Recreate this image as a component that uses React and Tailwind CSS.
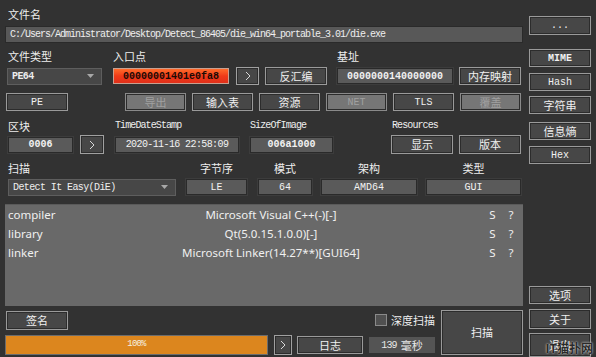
import React from "react";

const cjk = { fontFamily: '"Noto Sans CJK SC", "Noto Sans", sans-serif' };
const mono = { fontFamily: '"Liberation Mono", "Noto Sans CJK SC", monospace' };
const sans = { fontFamily: '"Noto Sans", "Noto Sans CJK SC", sans-serif' };

function Btn({ children, className = "", disabled = false, latin = false }) {
  return (
    <div
      className={
        "flex items-center justify-center border shadow-[inset_0_0_0_1px_#2c2c2c] " +
        (disabled
          ? "border-[#8a8a8a] bg-[#767676] text-[#a0a0a0] "
          : "border-[#9a9a9a] bg-[#474747] text-[#f0f0f0] ") +
        (latin ? "text-[10px] " : "text-[11px] ") +
        className
      }
      style={latin ? mono : cjk}
    >
      {children}
    </div>
  );
}

function Box({ children, className = "", bold = false }) {
  return (
    <div
      className={
        "flex items-center justify-center border border-[#2a2a2a] bg-[#5a5a5a] text-[10px] text-[#f2f2f2] shadow-[0_0_0_1px_#3c3c3c] " +
        (bold ? "font-bold " : "") +
        className
      }
      style={mono}
    >
      {children}
    </div>
  );
}

function Combo({ children, className = "" }) {
  return (
    <div
      className={
        "flex items-center justify-between border border-[#5e5e5e] bg-[#474747] pl-[4px] pr-[7px] text-[10px] text-[#eeeeee] " +
        className
      }
      style={mono}
    >
      <span className="tracking-[-0.6px]">{children}</span>
      <svg width="7" height="4" viewBox="0 0 7 4">
        <path d="M0 0 L7 0 L3.5 4 Z" fill="#a8a8a8" />
      </svg>
    </div>
  );
}

function Arrow({ className = "" }) {
  return (
    <div
      className={
        "flex items-center justify-center border border-[#a0a0a0] bg-[#474747] shadow-[inset_0_0_0_1px_#2c2c2c] " +
        className
      }
    >
      <svg width="6" height="10" viewBox="0 0 6 10">
        <path d="M1 1 L5 5 L1 9" stroke="#d8d8d8" strokeWidth="1" fill="none" />
      </svg>
    </div>
  );
}

function Label({ children, className = "", latin = false }) {
  return (
    <div
      className={(latin ? "text-[10px] tracking-[-0.9px] " : "text-[11px] ") + "leading-none text-[#eeeeee] " + className}
      style={latin ? mono : cjk}
    >
      {children}
    </div>
  );
}

const rows = [
  ["compiler", "Microsoft Visual C++(-)[-]"],
  ["library", "Qt(5.0.15.1.0.0)[-]"],
  ["linker", "Microsoft Linker(14.27**)[GUI64]"],
];

export default function App() {
  return (
    <div className="relative flex h-[357px] w-[596px] overflow-hidden bg-[#323232]">
      {/* left column */}
      <div className="ml-[5px] flex w-[518px] flex-col">
        <Label className="ml-[3px] mt-[9px] h-[12px]">文件名</Label>
        <div
          className="mt-[5px] flex h-[17px] items-center border border-[#2a2a2a] bg-[#585858] pl-[4px] text-[10px] tracking-[-1px] text-[#eeeeee]"
          style={mono}
        >
          C:/Users/Administrator/Desktop/Detect_86405/die_win64_portable_3.01/die.exe
        </div>

        {/* labels */}
        <div className="mt-[7px] flex h-[13px] items-center">
          <Label className="w-[108px] pl-[3px]">文件类型</Label>
          <Label className="w-[224px]">入口点</Label>
          <Label>基址</Label>
        </div>
        {/* inputs */}
        <div className="mt-[4px] flex h-[18px] items-center">
          <Combo className="ml-[2px] h-[17px] w-[95px]">
            <span className="font-bold">PE64</span>
          </Combo>
          <div
            className="ml-[11px] flex h-[16px] w-[116px] items-center justify-center border border-[#c8a090] bg-gradient-to-b from-[#ff6a2a] via-[#f03a18] to-[#e0301a] text-[10px] font-bold text-[#1a0a05]"
            style={mono}
          >
            00000001401e0fa8
          </div>
          <Arrow className="ml-[7px] h-[18px] w-[23px]" />
          <Btn className="ml-[6px] h-[18px] w-[62px]">反汇编</Btn>
          <Box bold className="ml-[10px] h-[16px] w-[116px]">
            0000000140000000
          </Box>
          <Btn className="ml-[6px] h-[18px] w-[62px]">内存映射</Btn>
        </div>
        {/* buttons */}
        <div className="mt-[8px] flex h-[18px] items-center">
          <Btn latin className="ml-[1px] h-[18px] w-[62px]">PE</Btn>
          <Btn disabled className="ml-[57px] h-[18px] w-[61px]">导出</Btn>
          <Btn className="ml-[6px] h-[18px] w-[61px]">输入表</Btn>
          <Btn className="ml-[6px] h-[18px] w-[61px]">资源</Btn>
          <Btn disabled latin className="ml-[6px] h-[18px] w-[61px]">NET</Btn>
          <Btn latin className="ml-[6px] h-[18px] w-[61px]">TLS</Btn>
          <Btn disabled className="ml-[6px] h-[18px] w-[61px]">覆盖</Btn>
        </div>

        {/* labels 2 */}
        <div className="mt-[9px] flex h-[12px] items-center">
          <Label className="w-[110px] pl-[3px]">区块</Label>
          <Label latin className="w-[135px]">TimeDateStamp</Label>
          <Label latin className="w-[142px]">SizeOfImage</Label>
          <Label latin>Resources</Label>
        </div>
        {/* row 2 */}
        <div className="mt-[3px] flex h-[19px] items-center">
          <Box bold className="ml-[3px] h-[16px] w-[65px]">0006</Box>
          <Arrow className="ml-[7px] h-[19px] w-[24px]" />
          <Box className="ml-[11px] h-[16px] w-[124px] tracking-[-0.6px]">2020-11-16 22:58:09</Box>
          <Box bold className="ml-[11px] h-[16px] w-[83px]">006a1000</Box>
          <Btn className="ml-[58px] h-[19px] w-[62px]">显示</Btn>
          <Btn className="ml-[6px] h-[19px] w-[62px]">版本</Btn>
        </div>

        {/* labels 3 */}
        <div className="mt-[7px] flex h-[14px] items-center">
          <Label className="w-[181px] pl-[3px]">扫描</Label>
          <Label className="w-[61px] text-center">字节序</Label>
          <Label className="ml-[11px] w-[54px] text-center">模式</Label>
          <Label className="ml-[9px] w-[96px] text-center">架构</Label>
          <Label className="ml-[9px] w-[95px] text-center">类型</Label>
        </div>
        {/* row 3 */}
        <div className="mt-[4px] flex h-[16px] items-center">
          <Combo className="ml-[3px] h-[17px] w-[168px]">Detect It Easy(DiE)</Combo>
          <Box className="ml-[10px] h-[16px] w-[61px]">LE</Box>
          <Box className="ml-[11px] h-[16px] w-[54px]">64</Box>
          <Box className="ml-[9px] h-[16px] w-[96px]">AMD64</Box>
          <Box className="ml-[9px] h-[16px] w-[95px]">GUI</Box>
        </div>

        {/* results */}
        <div className="mt-[9px] flex h-[102px] flex-col border-t border-[#5a5a5a] bg-[#696969] text-[11.5px] text-[#f0f0f0]" style={sans}>
          {rows.map(([a, b]) => (
            <div key={a} className="flex h-[19px] items-center">
              <div className="w-[55px] pl-[3px]">{a}</div>
              <div className="w-[422px] text-center">{b}</div>
              <div className="w-[21px] text-center">S</div>
              <div className="w-[16px] text-center">?</div>
            </div>
          ))}
        </div>

        {/* bottom */}
        <div className="mt-[4px] flex">
          <div className="flex w-[430px] flex-col">
            <div className="flex h-[20px] items-center justify-between">
              <Btn className="ml-[1px] mt-[1px] h-[19px] w-[62px]">签名</Btn>
              <div className="flex items-center">
                <div className="h-[12px] w-[12px] border border-[#8a8a8a] bg-[#505050]" />
                <span className="ml-[4px] text-[11px] text-[#eeeeee]" style={cjk}>深度扫描</span>
              </div>
            </div>
            <div className="mt-[5px] flex h-[20px] items-center">
              <div
                className="flex h-[20px] w-[263px] items-center justify-center border border-[#6c6c6c] bg-[#dc861e] text-[9px] tracking-[-0.8px] text-[#f5f0e0]"
                style={mono}
              >
                100%
              </div>
              <Arrow className="ml-[6px] h-[20px] w-[18px]" />
              <Btn className="ml-[5px] h-[18px] w-[66px]">日志</Btn>
              <div
                className="ml-[6px] flex h-[16px] w-[66px] items-center justify-center bg-[#545454] text-[11px] text-[#e8e8e8]"
                style={cjk}
              >
                <span style={mono} className="mr-[4px] text-[10px] tracking-[-0.8px]">139</span>毫秒
              </div>
            </div>
          </div>
          <Btn className="ml-[6px] h-[45px] w-[82px]">扫描</Btn>
        </div>
      </div>

      {/* right column */}
      <div className="ml-[6px] flex w-[62px] flex-col">
        <Btn latin className="mt-[16px] h-[19px]">...</Btn>
        <Btn latin className="mt-[14px] h-[18px] font-bold">MIME</Btn>
        <Btn latin className="mt-[6px] h-[18px]">Hash</Btn>
        <Btn className="mt-[5px] h-[18px]">字符串</Btn>
        <Btn className="mt-[8px] h-[18px]">信息熵</Btn>
        <Btn latin className="mt-[6px] h-[18px]">Hex</Btn>
        <Btn className="mt-[122px] h-[18px]">选项</Btn>
        <Btn className="mt-[5px] h-[20px]">关于</Btn>
        <Btn className="mt-[4px] h-[24px]">退出</Btn>
      </div>

      {/* watermark */}
      <div
        className="absolute bottom-[2px] right-[3px] text-[12px] font-bold leading-[14px] text-[#2a2a2a] [text-shadow:0_0_2px_#ffffff]"
        style={cjk}
      >
        IT猫扑网
      </div>
    </div>
  );
}
